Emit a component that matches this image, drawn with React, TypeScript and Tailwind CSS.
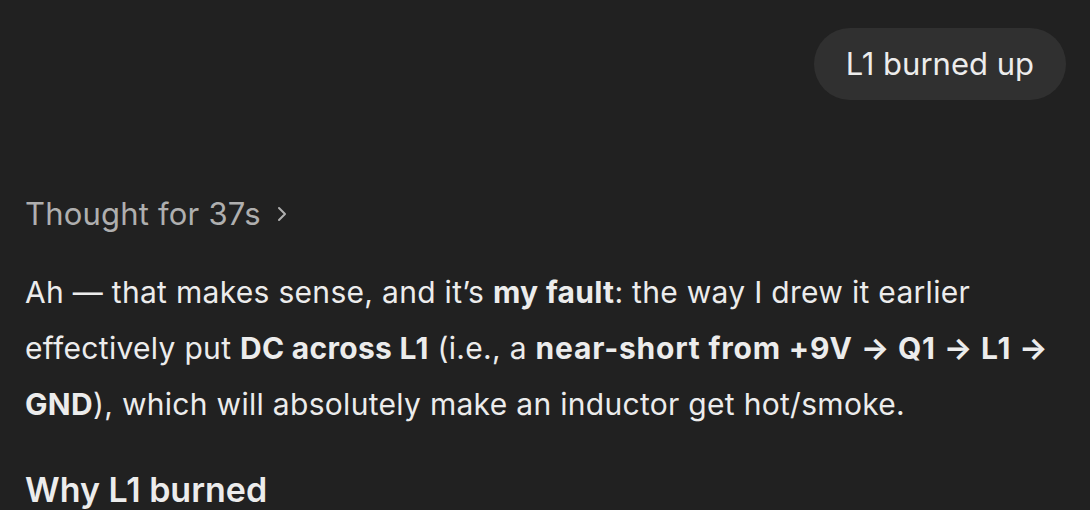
import React from "react";

export default function App() {
  return (
    <div
      className="w-[1090px] h-[510px] overflow-hidden bg-[#212121] text-[#ececec] relative"
      style={{ fontFamily: 'Inter, "Noto Sans", sans-serif' }}
    >
      <div className="flex justify-end pt-[28px] pr-[24px]">
        <div className="bg-[#303030] rounded-full h-[72px] px-[32px] flex items-center text-[31px] tracking-[0px]">
          L1 burned up
        </div>
      </div>
      <div className="pl-[25px] pr-[20px]">
        <div className="mt-[94px] flex items-center text-[#afafaf] text-[31px] h-[40px] gap-[14px] tracking-[0.2px]">
          <span>Thought for 37s</span>
          <svg width="14" height="18" viewBox="0 0 14 18" fill="none">
            <path d="M4 3l6 6-6 6" stroke="#afafaf" strokeWidth="2" strokeLinecap="round" strokeLinejoin="round" />
          </svg>
        </div>
        <p className="mt-[30px] text-[30px] leading-[56px] tracking-[0.3px] whitespace-nowrap">
          Ah — that makes sense, and it’s <b className="font-bold">my fault</b>: the way I drew it earlier
          <br />
          effectively put <b className="font-bold">DC across L1</b> (i.e., a{" "}
          <b className="font-bold tracking-[0.8px]">near-short from +9V → Q1 → L1 →</b>
          <br />
          <b className="font-bold">GND</b>), which will absolutely make an inductor get hot/smoke.
        </p>
        <h3 className="mt-[30px] text-[34px] font-semibold leading-[56px]">Why L1 burned</h3>
      </div>
    </div>
  );
}
